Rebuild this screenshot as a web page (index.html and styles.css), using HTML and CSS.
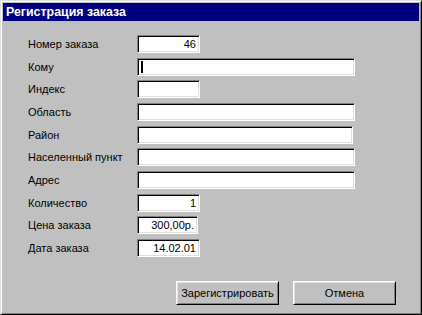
FILE: index.html
```html
<!DOCTYPE html>
<html>
  <head>
    <meta charset="UTF-8">
    <title>Регистрация заказа</title>
    <link rel="stylesheet" href="styles.css">
  </head>
  <body>
    <div class="window">
      <div class="title-bar">Регистрация заказа</div>

      <div class="content">
        <div class="form">
          <label>Номер заказа</label>
          <div class="field short num">46</div>

          <label>Кому</label>
          <div class="field wide"><span class="caret"></span></div>

          <label>Индекс</label>
          <div class="field short"></div>

          <label>Область</label>
          <div class="field wide"></div>

          <label>Район</label>
          <div class="field wide narrow"></div>

          <label>Населенный пункт</label>
          <div class="field wide"></div>

          <label>Адрес</label>
          <div class="field wide"></div>

          <label>Количество</label>
          <div class="field short num">1</div>

          <label>Цена заказа</label>
          <div class="field short price num">300,00р.</div>

          <label>Дата заказа</label>
          <div class="field short num">14.02.01</div>
        </div>

        <div class="buttons">
          <button class="btn">Зарегистрировать</button>
          <button class="btn">Отмена</button>
        </div>
      </div>
    </div>
  </body>
</html>
```

FILE: styles.css
```css
* {
  box-sizing: border-box;
}

body {
  margin: 0;
  font-family: "Liberation Sans", Arial, sans-serif;
  font-size: 11px;
  color: #000;
  background: #c0c0c0;
}

.window {
  width: 422px;
  height: 315px;
  display: flex;
  flex-direction: column;
  padding: 2px;
  background: #c0c0c0;
  border: 1px solid;
  border-color: #dfdfdf #000 #000 #dfdfdf;
  box-shadow: inset 1px 1px #fff, inset -1px -1px #808080;
}

.title-bar {
  height: 18px;
  padding-left: 3px;
  line-height: 19px;
  background: #000080;
  color: #fff;
  font-weight: bold;
  font-size: 12.4px;
}

.content {
  flex: 1;
  display: flex;
  flex-direction: column;
  padding: 14px 23px 7px 25px;
}

.form {
  display: grid;
  grid-template-columns: 109px auto;
  grid-auto-rows: 18px;
  row-gap: 4.67px;
  align-items: center;
}

.form label {
  white-space: nowrap;
}

.field {
  height: 18px;
  padding: 0 3px;
  line-height: 14px;
  background: #fff;
  border: 1px solid;
  border-color: #808080 #fff #fff #808080;
  box-shadow: inset 1px 1px #000, inset -1px -1px #dfdfdf;
  display: flex;
  align-items: center;
}

.field.short {
  width: 63px;
}

.field.price {
  width: 61px;
}

.field.wide {
  width: 218px;
}

.field.narrow {
  width: 216px;
}

.field.num {
  justify-content: flex-end;
}

.caret {
  width: 2px;
  height: 12px;
  background: #000;
}

.buttons {
  margin-top: auto;
  display: flex;
  justify-content: flex-end;
  gap: 14px;
}

.btn {
  width: 103px;
  height: 24px;
  padding: 0;
  font-family: inherit;
  font-size: 11px;
  color: #000;
  background: #c0c0c0;
  border: 1px solid;
  border-color: #fff #000 #000 #fff;
  box-shadow: inset 1px 1px #dfdfdf, inset -1px -1px #808080;
}
```
